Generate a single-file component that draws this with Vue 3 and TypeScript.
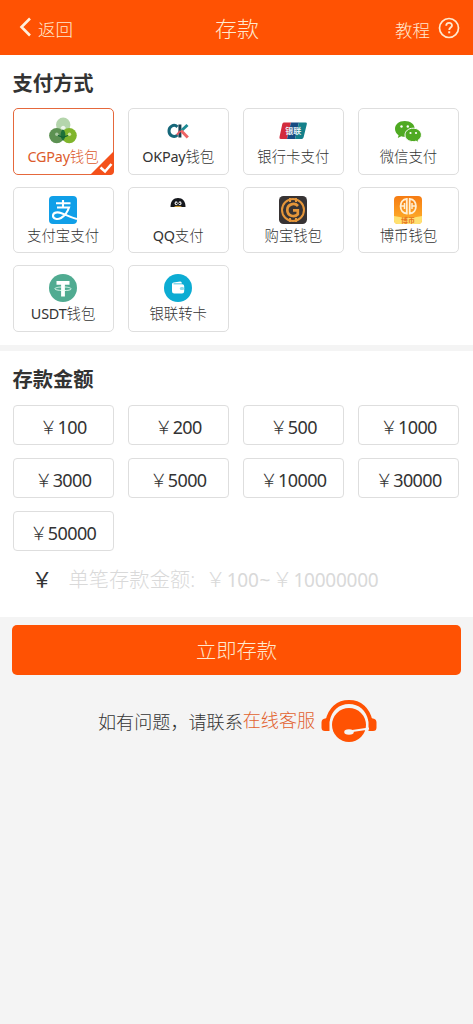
<script setup lang="ts">
import { ref } from 'vue'

interface Method {
  id: string
  latin: string
  name: string
}

const methods: Method[] = [
  { id: 'cg', latin: 'CGPay', name: '钱包' },
  { id: 'ok', latin: 'OKPay', name: '钱包' },
  { id: 'union', latin: '', name: '银行卡支付' },
  { id: 'wechat', latin: '', name: '微信支付' },
  { id: 'alipay', latin: '', name: '支付宝支付' },
  { id: 'qq', latin: 'QQ', name: '支付' },
  { id: 'gou', latin: '', name: '购宝钱包' },
  { id: 'bo', latin: '', name: '博币钱包' },
  { id: 'usdt', latin: 'USDT', name: '钱包' },
  { id: 'transfer', latin: '', name: '银联转卡' },
]
const amounts: number[] = [100, 200, 500, 1000, 3000, 5000, 10000, 30000, 50000]
const selected = ref<string>('cg')
</script>

<template>
  <div class="page">
    <header class="bar">
      <div class="back">
        <svg width="13" height="20" viewBox="0 0 13 20"><path d="M11 1.5 2.5 10 11 18.5" fill="none" stroke="#fff0dc" stroke-width="2.6" /></svg>
        <span>返回</span>
      </div>
      <h1>存款</h1>
      <div class="help">
        <span>教程</span>
        <svg width="22" height="22" viewBox="0 0 22 22" fill="none" stroke="#ffe9cf">
          <circle cx="11" cy="11" r="9.5" stroke-width="1.7" />
          <path d="M8.2 8.8c0-3.8 5.8-3.8 5.8-.4 0 2-2.8 2.2-2.8 4.5" stroke-width="1.8" />
          <path d="M11.2 14.3v2" stroke-width="2" />
        </svg>
      </div>
    </header>

    <section class="methods">
      <h2>支付方式</h2>
      <div class="grid">
        <button v-for="m in methods" :key="m.id" class="card" :class="{ on: selected === m.id }" @click="selected = m.id">
          <svg class="icon" viewBox="0 0 28 28">
            <g v-if="m.id === 'cg'">
              <circle cx="14.2" cy="7.8" r="7.2" fill="#b4d5ac" />
              <circle cx="7.7" cy="18.6" r="7.6" fill="#5c9152" />
              <circle cx="20.2" cy="18.6" r="7.6" fill="#80b52c" />
              <path d="M14 12c3.200 3 3.200 8.500 0 12-3.200-3.500-3.200-9 0-12z" fill="#1d7039" />
              <path d="M11.500 11q2.700-4.500 5.400 0l-2.700 2z" fill="#edf6ea" />
              <circle cx="7.800" cy="17.300" r="1.700" fill="#a8c7a2" />
              <circle cx="20.500" cy="17.300" r="1.700" fill="#d2e7a8" />
              <path d="M9 18.500l5 1.800 5-1.800" stroke="#126133" stroke-width="1.200" fill="none" />
            </g>
            <g v-else-if="m.id === 'ok'" fill="none" stroke-width="3">
              <path d="M13.5 9.800C9.700 6.500 5 9.500 5 14s5 7.200 8.500 4" stroke="#16677a" />
              <path d="M15.900 7.500v13" stroke="#173f50" />
              <path d="M23.500 8l-6.500 6" stroke="#1c8b94" />
              <path d="M17 13.500l6.800 7" stroke="#ef6465" />
              <path d="M12.800 17.800l3.500-4" stroke="#df5661" stroke-width="1.800" />
            </g>
            <g v-else-if="m.id === 'union'">
              <path d="M4.800 5.500H12L8 22H1.700Q0 22 .5 20L3.300 7Q3.700 5.500 4.800 5.500z" fill="#d32b3d" />
              <path d="M12 5.500h8L16 22H8z" fill="#174c83" />
              <path d="M20 5.500h6.700q1.500 0 1.100 1.700l-3.200 13Q24.200 22 22.700 22H16z" fill="#14808a" />
              <text x="6.200" y="17" class="union" textLength="16" lengthAdjust="spacing">银联</text>
            </g>
            <g v-else-if="m.id === 'wechat'">
              <path d="M10.700 4C4.900 4 1 7.500 1 12c0 2.600 1.400 4.800 3.600 6.200L3.800 21l3.500-1.700c1.100.4 2.300.5 3.400.5 5.800 0 10-3.500 10-8S16.500 4 10.700 4z" fill="#4faa22" />
              <path d="M19.200 11.200c-4.700 0-8.200 2.900-8.200 6.700s3.500 6.700 8.200 6.700c1 0 2-.1 2.800-.5l2.900 1.600-.8-2.500c2-1.200 3.300-3 3.300-5.300 0-3.800-3.500-6.700-8.200-6.700z" fill="#4faa22" stroke="#fff" stroke-width="1" />
              <g fill="#fff"><circle cx="7.500" cy="9.500" r="1.200" /><circle cx="13.800" cy="9.500" r="1.200" /><circle cx="16.500" cy="16" r="1.100" /><circle cx="22" cy="16" r="1.100" /></g>
            </g>
            <g v-else-if="m.id === 'alipay'">
              <rect width="28" height="28" rx="4" fill="#109fe8" />
              <path d="M14 4v7M7 7.300h14.500M8 11.500h12c-1.500 4.500-4.500 8.500-8 10.500-3.500 1.900-8 .9-8-2.300 0-3.400 4.500-4 8.500-2.500 4.500 1.600 9 4.300 15.500 5.800" fill="none" stroke="#fff" stroke-width="2.100" />
            </g>
            <g v-else-if="m.id === 'qq'">
              <path d="M6.500 11C6.500 5 9.500 2 14 2s7.500 3 7.500 9z" fill="#15171c" />
              <ellipse cx="12.100" cy="7.300" rx="1.500" ry="2" fill="#ddd" /><ellipse cx="16" cy="7.300" rx="1.500" ry="2" fill="#ddd" />
              <circle cx="12.500" cy="7.400" r=".7" fill="#111" /><circle cx="15.600" cy="7.400" r=".7" fill="#111" />
              <path d="M10.500 10.300q3.500-1 7 0v.7h-7z" fill="#c99a30" />
            </g>
            <g v-else-if="m.id === 'gou'" fill="none" stroke="#e5963a">
              <rect width="28" height="28" rx="4.500" fill="#373334" stroke="none" />
              <circle cx="14" cy="14" r="11" stroke-width="2" />
              <path d="M11 2v4M17 2v4M11 22v4M17 22v4" stroke-width="2" />
              <path d="M19 10C15.500 6.300 8.300 8 8.300 14s7.200 7.700 10.500 4.200V14.300H14" stroke-width="2.700" />
            </g>
            <g v-else-if="m.id === 'bo'">
              <defs><linearGradient id="bo-bg" x2="0" y2="1"><stop stop-color="#f67b12" /><stop offset="1" stop-color="#ffb52d" /></linearGradient></defs>
              <rect width="28" height="28" rx="4" fill="url(#bo-bg)" />
              <path d="M0 20q14 3.500 28 0v4q0 4-4 4H4q-4 0-4-4z" fill="#ffe171" />
              <g fill="none" stroke="#fff0d4" stroke-width="1.800">
                <path d="M12.800 3C4.500 3.500 4.500 17 12.800 17.500zM15.700 3c8.300.5 8.300 14 0 14.500z" />
                <path d="M7 10h3M18.500 10h3M10.500 7v6M18 7v6" stroke-width="1.500" />
              </g>
              <text x="14" y="26.800" text-anchor="middle" class="mini">博币</text>
            </g>
            <g v-else-if="m.id === 'usdt'">
              <circle cx="14" cy="14" r="14" fill="#50ab91" />
              <path d="M7.500 7h13v3.700h-4.600v11.800h-3.800V10.700H7.500z" fill="#fff" />
              <path d="M12 13C3.500 13.500 3.500 16.300 14 16.500S24.500 13.500 16 13" fill="none" stroke="#e9fff5" stroke-width=".9" />
            </g>
            <g v-else>
              <circle cx="14" cy="14" r="14" fill="#0cacd3" />
              <path d="M8 10.300q0-1.700 1.700-1.900l6.500-.8q1.500 0 1.800 1.800H9.500v.8h8.700q2 0 2 2v5q0 2.300-2.200 2.300h-7.800Q8 19.500 8 17.200z" fill="#fff" />
              <rect x="15.800" y="13" width="4.400" height="3" rx="1.500" fill="#8fdcec" />
            </g>
          </svg>
          <span class="label"><span v-if="m.latin" class="latin">{{ m.latin }}</span>{{ m.name }}</span>
          <svg v-if="selected === m.id" class="tick" viewBox="0 0 24 24">
            <path d="M24 0v20q0 4-4 4H0z" fill="#f4511b" />
            <path d="M10.500 16.500l4.500 4 6.500-7.500" fill="none" stroke="#fff" stroke-width="2.600" />
          </svg>
        </button>
      </div>
    </section>

    <section class="amounts">
      <h2>存款金额</h2>
      <div class="grid chips">
        <button v-for="a in amounts" :key="a" class="chip"><span class="yen">￥</span>{{ a }}</button>
      </div>
      <div class="entry">
        <span class="sign">￥</span>
        <span class="hint">单笔存款金额: <span class="yen">￥</span><span class="num">100<span class="tilde">~</span></span><span class="yen">￥</span><span class="num">10000000</span></span>
      </div>
    </section>

    <button class="submit">立即存款</button>

    <footer class="contact">
      <span>如有问题，请联系</span><a>在线客服</a>
      <svg width="56" height="44" viewBox="0 0 56 44">
        <path d="M6.500 22C9 10 17 3 28 3s19 7 21.500 19" fill="none" stroke="#ff5203" stroke-width="4" />
        <path d="M8.500 18.500V32H4q-3.500 0-3.500-3.500v-5q0-3.500 3.500-4zM47.500 18.500V32H52q3.500 0 3.500-3.500v-5q0-3.500-3.500-4z" fill="#ff5203" />
        <circle cx="28" cy="26" r="17" fill="#ff5203" />
        <path d="M28 32.500L48 29.500" stroke="#f4f4f4" stroke-width="2" />
        <ellipse cx="28" cy="33" rx="4.800" ry="2.800" fill="#f4f4f4" />
      </svg>
    </footer>
  </div>
</template>

<style>
body {
  margin: 0;
  background: #f4f4f4;
}
</style>

<style scoped>
.page {
  min-height: 1024px;
  background: #f4f4f4;
  color: #333;
  font-family: "Noto Sans", "Noto Sans CJK SC", sans-serif;
  font-weight: 300;
}
button {
  margin: 0;
  padding: 0;
  font: inherit;
  color: inherit;
  box-sizing: border-box;
}
.bar {
  box-sizing: border-box;
  height: 55px;
  padding: 2px 13px 0 19px;
  display: grid;
  grid-template-columns: 196px auto 1fr;
  align-items: center;
  background: #ff5203;
  color: #ffe9cf;
  font-size: 17.5px;
}
.bar h1 {
  margin: 0 0 2px;
  font-size: 22px;
  font-weight: 300;
  line-height: 30px;
}
.back,
.help {
  display: flex;
  align-items: center;
  gap: 6px;
  line-height: 24px;
}
.back svg {
  margin-bottom: 3px;
}
.help {
  justify-content: flex-end;
  gap: 8px;
}
.help span {
  padding-top: 2px;
}
.help svg {
  margin-bottom: 1px;
}
.methods,
.amounts {
  box-sizing: border-box;
  background: #fff;
  padding: 0 14px 0 12.5px;
}
.methods {
  height: 290px;
  padding-top: 13px;
}
.amounts {
  height: 266px;
  margin-top: 6px;
  padding-top: 13px;
}
h2 {
  margin: 0 0 10px;
  font-size: 20.3px;
  line-height: 30px;
  font-weight: 700;
}
.amounts h2 {
  margin-bottom: 11px;
}
.grid {
  display: grid;
  grid-template-columns: repeat(4, 1fr);
  gap: 12px 14px;
}
.card {
  position: relative;
  height: 66.7px;
  display: flex;
  flex-direction: column;
  align-items: center;
  padding-top: 8px;
  background: #fff;
  border: 1.5px solid #dedede;
  border-radius: 5px;
}
.card.on {
  border-color: #e5683c;
  color: #dc5b2c;
}
.icon {
  width: 28px;
  height: 28px;
  flex: none;
}
.label {
  margin-top: 2px;
  font-size: 14.4px;
  line-height: 20px;
  white-space: nowrap;
}
.latin {
  font-weight: 400;
  letter-spacing: -0.2px;
}
.mini {
  font-size: 7px;
  font-weight: 700;
  fill: #e8731c;
}
.union {
  font-size: 8px;
  font-weight: 700;
  fill: #e8f2f7;
}
.tick {
  position: absolute;
  right: -1px;
  bottom: -1px;
  width: 24px;
  height: 24px;
}
.chips {
  gap: 13px 14px;
}
.chip {
  height: 40px;
  background: #fff;
  border: 1.5px solid #dedede;
  border-radius: 4px;
  font-size: 18px;
  font-weight: 400;
  line-height: 37px;
  letter-spacing: -0.6px;
  padding-top: 2px;
}
.yen {
  font-family: "Noto Sans CJK SC", sans-serif;
  font-weight: 300;
  letter-spacing: 0;
}
.entry {
  display: flex;
  align-items: center;
  height: 54px;
  padding-left: 19px;
}
.sign {
  width: 37px;
  font-family: "Noto Sans CJK SC", sans-serif;
  font-size: 21px;
  font-weight: 400;
}
.hint {
  color: #d9d9d9;
  font-size: 20.3px;
  white-space: nowrap;
}
.hint > .yen:first-child {
  margin-left: 5px;
}
.num {
  font-size: 19px;
  font-weight: 400;
  letter-spacing: -0.25px;
  margin-left: 1px;
}
.tilde {
  margin: 0 2px 0 1px;
}
.submit {
  display: block;
  width: 449px;
  height: 50px;
  margin: 8px 0 0 12px;
  padding-bottom: 2px;
  border: 0;
  border-radius: 5px;
  background: #ff5203;
  color: #ffe9cf;
  font-size: 20.3px;
}
.contact {
  display: flex;
  align-items: center;
  height: 44px;
  margin-top: 24px;
  padding-left: 98px;
  font-size: 18.1px;
  white-space: nowrap;
}
.contact a {
  color: #e2622f;
  margin-bottom: 4px;
}
.contact svg {
  margin-left: 6px;
}
</style>
